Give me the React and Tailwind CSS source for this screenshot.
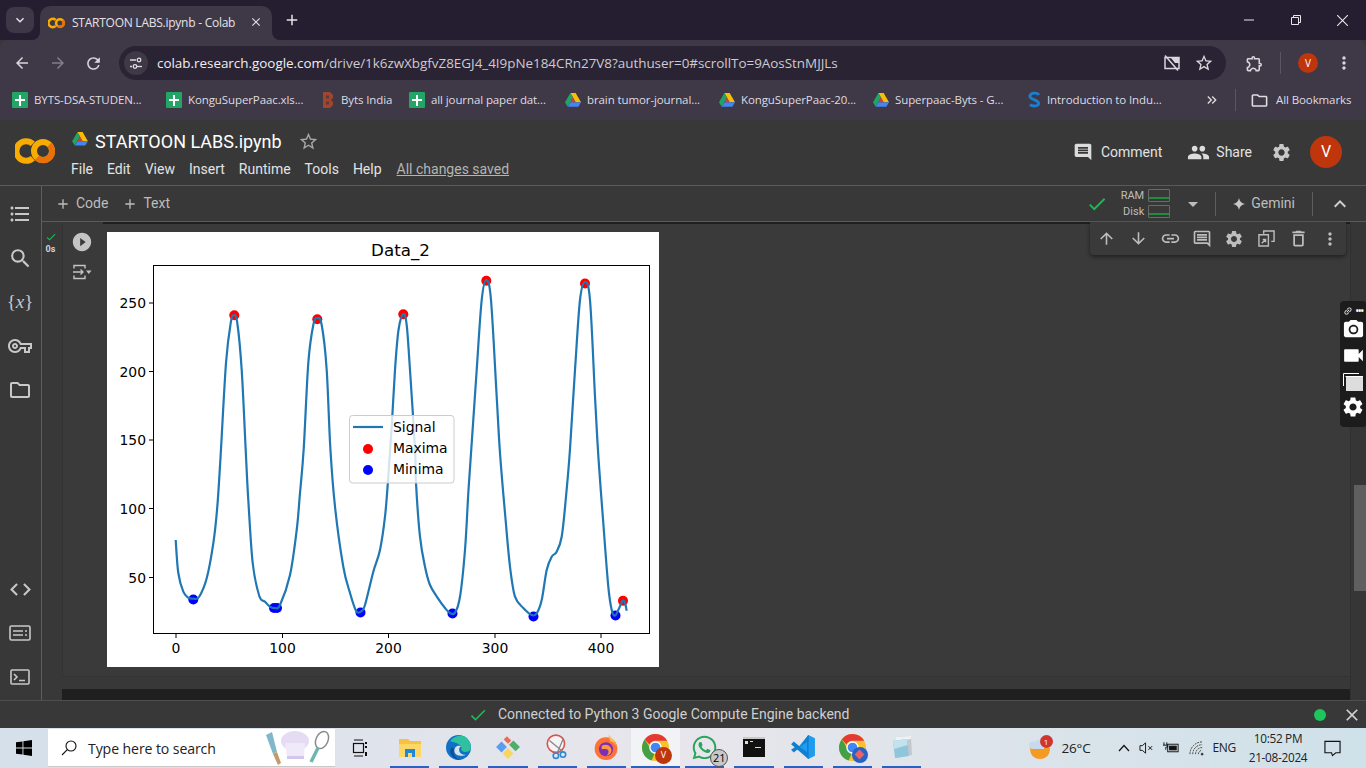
import {
  MdAdd, MdArrowBack, MdArrowDownward, MdArrowDropDown, MdArrowForward, MdArrowUpward, MdCheck, MdClose,
  MdCode, MdComment, MdExpandMore, MdFormatListBulleted, MdKeyboardArrowUp,
  MdKeyboardDoubleArrowRight, MdLink, MdMoreVert, MdOutlineComment, MdOutlineDelete, MdOutlineExtension,
  MdOutlineFolder, MdOutlineVpnKey, MdPeople, MdPhotoCamera, MdPlayCircleFilled, MdRefresh, MdSearch,
  MdSettings, MdStarBorder, MdVideocam,
} from 'react-icons/md';
import { FaWhatsapp } from 'react-icons/fa';

const signal = [
  [175.7, 540], [178.3, 573], [183.3, 591.7], [188.3, 597.7], [193.3, 598.7], [199, 597], [206.7, 578.3], [213.3, 543.3],
  [217.3, 506.7], [221, 449], [226, 363], [230.7, 323], [234, 315], [237.3, 323], [241.7, 370], [245.7, 450],
  [248.3, 500], [252.7, 563], [259.3, 596], [265, 601.7], [270, 606.7], [275, 608], [280, 605], [290, 575],
  [296.7, 530], [300, 493], [303.7, 449], [308.3, 363], [313.3, 325], [317.3, 318], [321.7, 325], [326.7, 370],
  [330.4, 449], [335, 506.7], [343.3, 566.7], [350, 593], [356, 610.7], [360.7, 611.7], [365, 605], [373.3, 571.7],
  [380, 550], [385, 516.7], [388.3, 476.7], [391.7, 426.7], [395, 370], [398.5, 330], [403.3, 314], [406.7, 325],
  [410, 370], [415, 449], [416, 483], [420, 536.7], [425, 566.7], [430, 585], [437.3, 597.3], [445, 608],
  [450, 613], [455, 612.7], [460, 596.7], [465, 550], [468.3, 493], [471.3, 449], [476.7, 370], [481.7, 300],
  [486.3, 280], [491, 300], [496.7, 396.7], [500, 453], [505, 513], [510, 566.7], [515, 596.7], [523.3, 608],
  [531.7, 615], [536.7, 613.3], [541.7, 600], [546.7, 570], [551.7, 556.7], [556.7, 551.7], [561.7, 536.7], [565.7, 500],
  [570, 449], [575, 370], [580, 300], [585, 282], [590, 300], [595, 396.7], [598.6, 460], [603.3, 523],
  [608.3, 586.7], [611.7, 610], [615, 615.7], [618.3, 610], [622.7, 600.7], [625, 603], [626.7, 610.7],
];

const maxima = [[234.3, 315.3], [317.3, 319.3], [403.3, 314.3], [486.3, 280.7], [585, 283.5], [623, 600.7]];
const minima = [[193.3, 599.5], [274, 608], [277, 608], [360.5, 612.5], [452.5, 613.5], [533.5, 616.5], [615.5, 615.5]];

// catmull-rom through the traced points
function smoothPath(pts) {
  let d = `M${pts[0][0]} ${pts[0][1]}`;
  for (let i = 0; i < pts.length - 1; i++) {
    const p0 = pts[i - 1] || pts[i];
    const p1 = pts[i];
    const p2 = pts[i + 1];
    const p3 = pts[i + 2] || p2;
    const c1x = p1[0] + (p2[0] - p0[0]) / 6;
    const c1y = p1[1] + (p2[1] - p0[1]) / 6;
    const c2x = p2[0] - (p3[0] - p1[0]) / 6;
    const c2y = p2[1] - (p3[1] - p1[1]) / 6;
    d += ` C${c1x.toFixed(1)} ${c1y.toFixed(1)} ${c2x.toFixed(1)} ${c2y.toFixed(1)} ${p2[0]} ${p2[1]}`;
  }
  return d;
}

function ColabLogo({ className }) {
  return (
    <svg viewBox="0 0 40 28" className={className}>
      <path d="M17.800 6.800A9.800 9.800 0 1 0 17.800 21.200" fill="none" stroke="#f9ab00" strokeWidth="6" />
      <circle cx="28" cy="14" r="9" fill="none" stroke="#f9ab00" strokeWidth="6" />
      <path d="M34.400 7.600A9 9 0 0 1 22 20.700" fill="none" stroke="#e8710a" strokeWidth="6" />
    </svg>
  );
}

function Sheets() {
  return (
    <svg viewBox="0 0 16 16" className="w-4 h-4 shrink-0">
      <rect width="16" height="16" rx="1" fill="#23a566" />
      <path d="M7 3h2v4h4v2H9v5H7V9H3V7h4z" fill="#fff" />
    </svg>
  );
}

function Drive({ className = 'w-4 h-4 shrink-0' }) {
  return (
    <svg viewBox="0 0 18 16" className={className}>
      <path d="M6 0h6l6 10.500h-6z" fill="#fbbc04" />
      <path d="M6 0l3 5.200-6 10.300-3-5z" fill="#1fa463" />
      <path d="M3 15.500l3-5h12l-3 5z" fill="#4285f4" />
      <path d="M6 10.500h6L9 5.200z" fill="#ea4335" opacity="0.85" />
    </svg>
  );
}

function BytsIcon() {
  return (
    <svg viewBox="0 0 14 18" className="w-[14px] h-[18px] shrink-0">
      <path d="M2 1h7l3 3v3l-2 2 2 2v3l-3 3H2z" fill="#a2452f" />
      <path d="M5 4.500h3v3H5zM5 10.500h3v3H5z" fill="#5e3a34" />
    </svg>
  );
}

function StudyIcon() {
  return (
    <svg viewBox="0 0 14 18" className="w-[13px] h-[18px] shrink-0">
      <path d="M12 3.500C10 1 3 .5 2 4.500c-1 4 9 4 9.500 8 .3 3-6 4-9.500 1.500" fill="none" stroke="#1a7fd0" strokeWidth="3" />
    </svg>
  );
}

const bookmarks = [
  { icon: <Sheets />, label: 'BYTS-DSA-STUDEN...', box: 'w-[154px]' },
  { icon: <Sheets />, label: 'KonguSuperPaac.xls...', box: 'w-[155px]' },
  { icon: <BytsIcon />, label: 'Byts India', box: 'w-[88px]' },
  { icon: <Sheets />, label: 'all journal paper dat...', box: 'w-[156px]' },
  { icon: <Drive />, label: 'brain tumor-journal...', box: 'w-[154px]' },
  { icon: <Drive />, label: 'KonguSuperPaac-20...', box: 'w-[154px]' },
  { icon: <Drive />, label: 'Superpaac-Byts - G...', box: 'w-[155px]' },
  { icon: <StudyIcon />, label: 'Introduction to Indu...', box: 'w-[150px]' },
];

function TabStrip() {
  return (
    <div className="h-10 shrink-0 bg-[#251d30] flex items-end relative">
      <div className="absolute left-[6px] top-[7px] w-[28px] h-[26px] rounded-lg bg-[#3e3747] flex items-center justify-center text-[#e8e6ea]">
        <MdExpandMore size={16} />
      </div>
      <div className="ml-10 w-[232px] h-[34px] rounded-t-[10px] bg-[#3f3847] flex items-center pl-2 relative">
        <svg viewBox="0 0 8 8" className="absolute -left-[8px] bottom-0 w-2 h-2"><path d="M8 0v8H0a8 8 0 0 0 8-8z" fill="#3f3847" /></svg>
        <ColabLogo className="w-[17px] h-[12px] shrink-0" />
        <span className="ml-[7px] text-[12px] text-[#e4e2e7] whitespace-nowrap tracking-[-0.25px]">STARTOON LABS.ipynb - Colab</span>
        <MdClose size={14} className="absolute left-[209px] top-[9px] text-[#dedce1]" />
        <svg viewBox="0 0 8 8" className="absolute -right-[8px] bottom-0 w-2 h-2"><path d="M0 0v8h8a8 8 0 0 1-8-8z" fill="#3f3847" /></svg>
      </div>
      <MdAdd size={18} className="ml-[11px] mb-[11px] text-[#e4e2e7]" />
      <div className="ml-auto flex items-center h-full text-[#e8e6ea]">
        <svg viewBox="0 0 10 10" className="w-[10px] h-[10px] mr-[37px]"><path d="M0 5h10" stroke="currentColor" /></svg>
        <svg viewBox="0 0 10 10" className="w-[10px] h-[10px] mr-[36px]"><path d="M.5 2.500h7v7h-7zM2.500 2.500V.5h7v7h-2" fill="none" stroke="currentColor" /></svg>
        <svg viewBox="0 0 10 10" className="w-[11px] h-[11px] mr-[18px]"><path d="M0 0l10 10M10 0L0 10" stroke="currentColor" /></svg>
      </div>
    </div>
  );
}

function AddressRow() {
  return (
    <div className="h-10 shrink-0 bg-[#3f3847] rounded-tl-lg rounded-tr-lg flex items-center pt-[6px] text-[#d9d6dd]">
      <MdArrowBack size={18} className="ml-[13px]" />
      <MdArrowForward size={18} className="ml-[18px] text-[#837d8a]" />
      <MdRefresh size={19} className="ml-[17px]" />
      <div className="ml-4 w-[1107px] h-[34px] rounded-full bg-[#2a2333] flex items-center">
        <div className="ml-[5px] w-6 h-6 rounded-full bg-[#3f3847] flex items-center justify-center">
          <svg viewBox="0 0 14 14" className="w-[14px] h-[14px]" fill="none" stroke="#dedce1" strokeWidth="1.300">
            <path d="M1 4h6M1 10.500h2" />
            <circle cx="10" cy="4" r="1.800" />
            <circle cx="6" cy="10.500" r="1.800" />
            <path d="M8 10.500h5" />
          </svg>
        </div>
        <span className="ml-[8px] pl-px text-[13.45px] whitespace-nowrap text-[#cdcad2] tracking-[-0.02px]">
          <span className="text-[#f0eef1]">colab.research.google.com</span>/drive/1k6zwXbgfvZ8EGJ4_4I9pNe184CRn27V8?authuser=0#scrollTo=9AosStnMJJLs
        </span>
        <svg viewBox="0 0 18 18" className="w-[18px] h-[18px] ml-auto text-[#d9d6dd]" fill="none" stroke="currentColor" strokeWidth="1.500">
          <path d="M2 3.500h14v11H2z" />
          <path d="M8 4h8v5H12z" fill="currentColor" stroke="none" />
          <path d="M2 1.500l13 15" />
        </svg>
        <MdStarBorder size={20} className="ml-[13px] mr-[12px]" />
      </div>
      <MdOutlineExtension size={19} className="ml-[19px]" />
      <div className="ml-[16px] h-[22px] w-px bg-[#5b5463]" />
      <div className="ml-[17px] w-5 h-5 rounded-full bg-[#bf360c] flex items-center justify-center text-[10px] text-white">V</div>
      <MdMoreVert size={20} className="ml-[16px]" />
    </div>
  );
}

function BookmarkRow() {
  return (
    <div className="h-10 shrink-0 bg-[#3f3847] flex items-center pl-[12px] text-[11.5px] text-[#dedce1] tracking-[-0.1px]">
      {bookmarks.map((b, i) => (
        <div key={i} className={`${b.box} flex items-center gap-[6px] whitespace-nowrap`}>
          {b.icon}
          <span>{b.label}</span>
        </div>
      ))}
      <MdKeyboardDoubleArrowRight size={16} className="ml-[26px]" />
      <div className="ml-[15px] h-[22px] w-px bg-[#5b5463]" />
      <MdOutlineFolder size={19} className="ml-[14px]" />
      <span className="ml-[7px] whitespace-nowrap">All Bookmarks</span>
    </div>
  );
}

function ColabHeader() {
  const menus = ['File', 'Edit', 'View', 'Insert', 'Runtime', 'Tools', 'Help'];
  return (
    <div className="h-[65px] shrink-0 bg-[#383838] flex font-['Roboto',sans-serif]">
      <div className="w-[72px] shrink-0 pl-[15px] pt-[17px]">
        <ColabLogo className="w-[40px] h-[28px]" />
      </div>
      <div className="pt-[9px]">
        <div className="flex items-center h-[24px]">
          <Drive className="w-[16px] h-[14px] mb-[5px] shrink-0" />
          <span className="ml-[7px] text-[18px] text-white whitespace-nowrap">STARTOON LABS.ipynb</span>
          <MdStarBorder size={21} className="ml-[16px] text-[#a8a8a8]" />
        </div>
        <div className="flex items-center mt-[6px] -ml-px text-[14px] text-[#e3e3e3] gap-[14px] whitespace-nowrap">
          {menus.map((m) => <span key={m}>{m}</span>)}
          <span className="underline text-[#b4b4b4] ml-px">All changes saved</span>
        </div>
      </div>
      <div className="ml-auto flex items-center h-[56px] mt-[4px] text-[14px] text-[#e3e3e3]">
        <MdComment size={20} className="text-[#dcdcdc]" />
        <span className="ml-[8px]">Comment</span>
        <MdPeople size={23} className="ml-[25px] text-[#dcdcdc]" />
        <span className="ml-[6px]">Share</span>
        <MdSettings size={21} className="ml-[19px] text-[#c8c8c8]" />
        <div className="ml-[18px] mr-[24px] w-8 h-8 rounded-full bg-[#bf360c] flex items-center justify-center text-white text-[16px]">V</div>
      </div>
    </div>
  );
}

function Sidebar() {
  return (
    <div className="w-[42px] shrink-0 border-r border-[#5e5e5e] bg-[#383838] flex flex-col items-center text-[#c8c8c8] pb-[1px] pr-[1px]">
      <div className="h-[6px]" />
      <div className="h-[44px] flex items-center justify-center"><MdFormatListBulleted size={24} /></div>
      <div className="h-[44px] flex items-center justify-center"><MdSearch size={25} /></div>
      <div className="h-[44px] flex items-center justify-center font-['Liberation_Serif',serif] text-[19px]">{'{'}<span className="italic">x</span>{'}'}</div>
      <div className="h-[44px] flex items-center justify-center"><MdOutlineVpnKey size={24} /></div>
      <div className="h-[44px] flex items-center justify-center"><MdOutlineFolder size={24} /></div>
      <div className="mt-auto h-[44px] flex items-center justify-center"><MdCode size={25} /></div>
      <div className="h-[44px] flex items-center justify-center">
        <svg viewBox="0 0 22 16" className="w-[22px] h-4" fill="none" stroke="currentColor" strokeWidth="1.600">
          <rect x="1" y="1" width="20" height="14" rx="1.500" />
          <path d="M4 6h10M4 10h10M16 6h2M16 10h2" />
        </svg>
      </div>
      <div className="h-[44px] flex items-center justify-center">
        <svg viewBox="0 0 20 16" className="w-5 h-4" fill="none" stroke="currentColor" strokeWidth="1.600">
          <rect x="1" y="1" width="18" height="14" rx="1" />
          <path d="M4 5l3 3-3 3M9 11.500h6" />
        </svg>
      </div>
    </div>
  );
}

function RamBar({ label }) {
  return (
    <div className="flex items-center gap-[4px]">
      <span>{label}</span>
      <div className="w-[22px] h-[13px] border border-[#6a6a6a] rounded-[1px] flex items-end">
        <div className="w-full h-[2px] mb-[2px] bg-[#1e8e3e]" />
      </div>
    </div>
  );
}

function NotebookToolbar() {
  return (
    <div className="h-[36px] shrink-0 border-b border-[#5a5a5a] bg-[#383838] flex items-center text-[14px] text-[#bdbdbd] font-['Roboto',sans-serif]">
      <MdAdd size={16} className="ml-[13px]" />
      <span className="ml-[5px]">Code</span>
      <MdAdd size={16} className="ml-[14px]" />
      <span className="ml-[5px]">Text</span>
      <MdCheck size={22} className="ml-auto text-[#1db954]" />
      <div className="ml-[13px] flex flex-col items-end gap-[3px] text-[11px] leading-[13px] text-[#bdbdbd]">
        <RamBar label="RAM" />
        <RamBar label="Disk" />
      </div>
      <MdArrowDropDown size={24} className="ml-[11px]" />
      <div className="ml-[10px] h-6 w-px bg-[#5e5e5e]" />
      <svg viewBox="0 0 12 12" className="w-3 h-3 ml-[17px]"><path d="M6 0c.6 3.500 2.500 5.400 6 6-3.500.6-5.400 2.500-6 6-.6-3.500-2.500-5.400-6-6 3.500-.6 5.400-2.500 6-6z" fill="#c8c8c8" /></svg>
      <span className="ml-[6px]">Gemini</span>
      <div className="ml-[17px] h-6 w-px bg-[#5e5e5e]" />
      <MdKeyboardArrowUp size={24} className="ml-[15px] mr-[14px] text-[#d0d0d0]" />
    </div>
  );
}

function Chart() {
  const yTicks = [[303, '250'], [371.500, '200'], [440, '150'], [508.500, '100'], [577.500, '50']];
  const xTicks = [[176, '0'], [282.500, '100'], [388.500, '200'], [495, '300'], [601, '400']];
  return (
    <svg viewBox="107 232 552 435" className="w-[552px] h-[435px] shrink-0 bg-white" fontFamily="'DejaVu Sans', sans-serif" fill="#000">
      <text x="400.500" y="256" fontSize="16.700" textAnchor="middle">Data_2</text>
      {maxima.map(([x, y], i) => <circle key={i} cx={x} cy={y} r="5" fill="#ff0000" />)}
      {minima.map(([x, y], i) => <circle key={i} cx={x} cy={y} r="5" fill="#0000ff" />)}
      <path d={smoothPath(signal)} fill="none" stroke="#1f77b4" strokeWidth="2.200" strokeLinejoin="round" />
      <rect x="153.500" y="265.500" width="496" height="368" fill="none" stroke="#000" strokeWidth="1" />
      {yTicks.map(([y, t]) => (
        <g key={t}>
          <path d={`M149 ${y}H153`} stroke="#000" />
          <text x="146" y={y + 5} fontSize="13.900" textAnchor="end">{t}</text>
        </g>
      ))}
      {xTicks.map(([x, t]) => (
        <g key={t}>
          <path d={`M${x} 634V638`} stroke="#000" />
          <text x={x} y="653" fontSize="13.900" textAnchor="middle">{t}</text>
        </g>
      ))}
      <rect x="349.500" y="415.500" width="104.500" height="67.500" rx="3" fill="#fff" fillOpacity="0.8" stroke="#ccc" />
      <path d="M353 427H383" stroke="#1f77b4" strokeWidth="2.200" />
      <text x="393" y="432" fontSize="13.900">Signal</text>
      <circle cx="368" cy="449" r="5" fill="#ff0000" />
      <text x="393" y="453" fontSize="13.900">Maxima</text>
      <circle cx="368" cy="470" r="5" fill="#0000ff" />
      <text x="393" y="474" fontSize="13.900">Minima</text>
    </svg>
  );
}

function CellToolbar() {
  const cls = 'w-8 flex items-center justify-center';
  return (
    <div className="absolute right-[20px] top-0 w-[256px] h-[33px] bg-[#3a3a3a] rounded-b-[4px] shadow-[0_2px_4px_rgba(0,0,0,0.45)] flex items-center text-[#bdbdbd]">
      <div className={cls}><MdArrowUpward size={19} /></div>
      <div className={cls}><MdArrowDownward size={19} /></div>
      <div className={cls}><MdLink size={21} /></div>
      <div className={cls}><MdOutlineComment size={20} /></div>
      <div className={cls}><MdSettings size={20} /></div>
      <div className={cls}>
        <svg viewBox="0 0 18 18" className="w-[17px] h-[17px]" fill="none" stroke="currentColor" strokeWidth="1.500">
          <path d="M6 4V1h11v11h-3M1 5h10v12H1z" />
          <path d="M4 14l4-4M5 10h3v3" />
        </svg>
      </div>
      <div className={cls}><MdOutlineDelete size={21} /></div>
      <div className={cls}><MdMoreVert size={20} /></div>
    </div>
  );
}

function FloatingWidget() {
  return (
    <div className="absolute right-0 top-[79px] w-[26px] h-[126px] bg-[#1c1c1c] rounded-l-[4px] rounded-r-[3px] flex flex-col items-center text-white">
      <div className="h-[17px] flex items-center gap-[3px] text-[8px] leading-none pt-[2px]">
        <MdLink size={10} className="-rotate-45" />
        <span className="tracking-[-0.5px] font-bold">•••</span>
      </div>
      <MdPhotoCamera size={23} />
      <MdVideocam size={25} className="mt-[2px]" />
      <svg viewBox="0 0 20 18" className="w-5 h-[18px] mt-[5px]" fill="none">
        <path d="M.5 13V.5H16" stroke="#fff" />
        <path d="M3 4h17v14H3z" fill="#ddd" />
        <path d="M2.500 3.500H20" stroke="#fff" />
      </svg>
      <MdSettings size={24} className="mt-[4px]" />
    </div>
  );
}

function Notebook() {
  return (
    <div className="flex-1 min-w-0 flex flex-col">
      <NotebookToolbar />
      <div className="flex-1 min-h-0 flex relative bg-[#383838]">
        <div className="flex-1 min-w-0 flex flex-col">
          <div className="h-[2px] shrink-0 ml-[61px] bg-[#1f1f1f]" />
          <div className="flex flex-1 min-h-0">
            <div className="w-[20px] shrink-0 flex flex-col items-center pt-[7px] pr-[3px] font-['Roboto',sans-serif]">
              <MdCheck size={12} className="text-[#1db954]" />
              <span className="text-[9px] leading-[11px] font-bold text-[#d4d4d4] mt-[1px]">0s</span>
            </div>
            <div className="flex-1 min-w-0 flex flex-col">
              <div className="h-[453px] shrink-0 flex border-l border-b border-[#333333] bg-[#3a3a3a]">
                <div className="w-[44px] shrink-0 flex flex-col items-center text-[#c4c4c4] pt-[7px] pr-[7px]">
                  <MdPlayCircleFilled size={22} />
                  <svg viewBox="0 0 20 16" className="w-5 h-4 mt-[11px]" fill="none" stroke="currentColor" strokeWidth="1.400">
                    <path d="M2 4.500V1.500h11v3M2 11.500v3h11v-3M1 8h10M8.500 5.500L11 8l-2.500 2.500" />
                    <path d="M14 6.500h5.500l-2.750 3.500z" fill="currentColor" stroke="none" />
                  </svg>
                </div>
                <div className="pt-[8px]">
                  <Chart />
                </div>
              </div>
              <div className="h-[12px] shrink-0" />
              <div className="h-[11px] shrink-0 bg-[#1f1f1f]" />
            </div>
          </div>
        </div>
        <div className="w-4 shrink-0 bg-[#363636] border-l border-[#303030] pl-[3px] pt-[263px]">
          <div className="h-[106px] bg-[#5f5f5f]" />
        </div>
        <CellToolbar />
        <FloatingWidget />
      </div>
    </div>
  );
}

function StatusBar() {
  return (
    <div className="h-[28px] shrink-0 border-t border-[#4e4e4e] bg-[#383838] flex items-center text-[14px] text-[#cfcfcf] font-['Roboto',sans-serif]">
      <MdCheck size={20} className="ml-[468px] text-[#1db954]" />
      <span className="ml-[10px]">Connected to Python 3 Google Compute Engine backend</span>
      <div className="ml-auto w-3 h-3 rounded-full bg-[#1ec45c]" />
      <MdClose size={20} className="ml-[16px] mr-[4px] text-[#d0d0d0]" />
    </div>
  );
}

function Explorer() {
  return (
    <svg viewBox="0 0 24 24" className="w-6 h-6">
      <path d="M1 4h9l2 2h11v16H1z" fill="#f5c242" />
      <path d="M1 9h22v13H1z" fill="#fcd765" />
      <path d="M7 14h10v8h-3v-4h-4v4H7z" fill="#1f88d9" />
    </svg>
  );
}

function Edge() {
  return (
    <svg viewBox="0 0 24 24" className="w-[25px] h-[25px]">
      <circle cx="12" cy="12" r="12" fill="#1172c4" />
      <path d="M4 6C8 0 17-1 21 4c2 2.500 3 5 3 8 0 3-3 5-7 4-2-.5-3-2-2-4-1-3-6-5-11-6z" fill="#2fc0a0" />
      <path d="M5 12c-3 6 2 12 10 12-6-1-9-6-7-11z" fill="#0c4e99" />
      <path d="M8 15c0-4 4-6 7-4-2 0-3 2-2 5 .6 2 3 3 6 3-3 2-11 1-11-4z" fill="#d6e2ec" />
    </svg>
  );
}

function Diamonds() {
  return (
    <svg viewBox="0 0 24 24" className="w-[26px] h-[26px]">
      <path d="M1 12l5-5 5 5-5 5z" fill="#5b9bf0" />
      <path d="M8 5l3-3 4 4-3 3z" fill="#ea6a5a" />
      <path d="M13 10l4-4 6 6-4 4z" fill="#4caf6a" />
      <path d="M7 18l5-5 5 5-5 5z" fill="#f6d660" />
    </svg>
  );
}

function Snip() {
  return (
    <svg viewBox="0 0 24 24" className="w-[26px] h-[26px]" fill="none">
      <circle cx="11" cy="9" r="8" stroke="#d9534f" strokeWidth="1.500" fill="#f4f4f6" />
      <path d="M5 6l12 10M18 4L12 18" stroke="#888" strokeWidth="1.200" />
      <circle cx="17.500" cy="19" r="2.500" stroke="#2b8ad6" strokeWidth="1.500" />
      <circle cx="11" cy="20" r="2.500" stroke="#2b8ad6" strokeWidth="1.500" />
    </svg>
  );
}

function Firefox() {
  return (
    <svg viewBox="0 0 24 24" className="w-[26px] h-[26px]">
      <circle cx="12" cy="13.500" r="10.500" fill="#ff7139" />
      <path d="M14 1c3 2 7 6 8 11-1-3-4-5-6-5z" fill="#ffbd4f" />
      <circle cx="12" cy="14" r="6.500" fill="#7b2fb5" />
      <path d="M8 11c3-2 8-1 9 3 .5 3-2 6-5 6 2-1 3-3 2-5-1-1.500-4-1-6-1z" fill="#ff9640" />
    </svg>
  );
}

function Chrome({ badge }) {
  return (
    <div className="relative w-[27px] h-[27px]">
      <svg viewBox="0 0 24 24" className="w-[27px] h-[27px]">
        <circle cx="12" cy="12" r="12" fill="#fbc02d" />
        <path d="M12 0a12 12 0 0 1 10.400 6H12a6 6 0 0 0-5.400 3.300L2.500 4.700A12 12 0 0 1 12 0z" fill="#e53935" />
        <path d="M2.500 4.700L8 14a6 6 0 0 0 3 4l-2.500 5.500A12 12 0 0 1 2.500 4.700z" fill="#43a047" />
        <circle cx="12" cy="12" r="5.500" fill="#fff" />
        <circle cx="12" cy="12" r="4.300" fill="#4285f4" />
      </svg>
      {badge}
    </div>
  );
}

function Cmd() {
  return (
    <svg viewBox="0 0 24 24" className="w-[24px] h-[24px]">
      <rect x="1" y="2" width="22" height="20" fill="#111" />
      <rect x="1" y="2" width="22" height="2" fill="#c9c9c9" />
      <path d="M3 6h3v3H3zM8 6h3v1H8zM13 12h6v1h-6z" fill="#ddd" />
    </svg>
  );
}

function VsCode() {
  return (
    <svg viewBox="0 0 24 24" className="w-[26px] h-[26px]">
      <path d="M17 1l6 3v16l-6 3-10-10z" fill="#1f9cf0" />
      <path d="M17 1v22l-1-1V2z" fill="#0a6fb8" />
      <path d="M17 6.500L9 12l8 5.500v5.500L1 9.500 3.500 7l5.500 4.500L17 1z" fill="#0f7fd0" />
      <path d="M1 14.500L3.500 17l5-4-2.500-2z" fill="#0f7fd0" />
    </svg>
  );
}

function Notepad() {
  return (
    <svg viewBox="0 0 24 24" className="w-[24px] h-[26px]">
      <path d="M7 2l15-1 1 19-15 3z" fill="#c2c8cc" />
      <path d="M7 2l15-1v3L7 6z" fill="#eef2f4" />
      <path d="M4 6l14-2 2 17-14 2z" fill="#8fc6dc" />
      <path d="M4 6l14-2 .5 6L5 14z" fill="#c2e2ee" />
    </svg>
  );
}

const taskApps = [
  { el: <Explorer /> },
  { el: <Edge /> },
  { el: <Diamonds /> },
  { el: <Snip /> },
  { el: <Firefox /> },
  {
    el: (
      <Chrome
        badge={<div className="absolute -right-[3px] -bottom-[3px] w-[17px] h-[17px] rounded-full bg-[#bf360c] text-white text-[9px] flex items-center justify-center">V</div>}
      />
    ),
    active: true,
  },
  {
    el: (
      <div className="relative">
        <FaWhatsapp size={27} className="text-[#2aa65c]" />
        <div className="absolute -right-[10px] -bottom-[6px] w-[18px] h-[18px] rounded-full bg-[#c8c8c8] border border-[#555] text-[11px] leading-none text-black flex items-center justify-center">21</div>
      </div>
    ),
  },
  { el: <Cmd /> },
  { el: <VsCode /> },
  {
    el: (
      <Chrome
        badge={<div className="absolute -right-[2px] -bottom-[2px] w-[16px] h-[16px] rounded-full bg-[#2563c9] flex items-center justify-center"><div className="w-[7px] h-[7px] rotate-45 bg-[#f06060]" /></div>}
      />
    ),
  },
  { el: <Notepad /> },
];

function Taskbar() {
  return (
    <div className="h-10 shrink-0 bg-linear-to-r from-[#d5e0eb] via-[#e8e6ec] to-[#cfe1e9] flex font-['Open_Sans',sans-serif] text-black">
      <div className="w-[48px] shrink-0 flex items-center justify-center">
        <svg viewBox="0 0 16 16" className="w-4 h-4">
          <path d="M0 2.300L6.500 1.400V7.600H0zM7.400 1.300L16 0V7.600H7.400zM0 8.400H6.500V14.600L0 13.700zM7.400 8.400H16V16L7.400 14.700z" fill="#000" />
        </svg>
      </div>
      <div className="w-[287px] shrink-0 my-[1px] bg-white border-b border-[#c8c8c8] flex items-center relative">
        <svg viewBox="0 0 16 16" className="w-[16px] h-[16px] ml-[13px]" fill="none" stroke="#111" strokeWidth="1.100">
          <circle cx="10" cy="6" r="5" />
          <path d="M6.300 9.700L1 15" />
        </svg>
        <span className="ml-[11px] pt-[2px] text-[14.1px] tracking-[-0.1px] text-[#222]">Type here to search</span>
        <svg viewBox="0 0 66 38" className="w-[66px] h-[38px] ml-auto mr-[4px]">
          <path d="M1 6l6-3 5 20-4 2z" fill="#7fb8c8" />
          <path d="M8 25l4-2 4 11-3 2z" fill="#c59a6a" />
          <ellipse cx="30" cy="12" rx="14" ry="10" fill="#e5dcf4" />
          <path d="M20 14h20l-1 14H22z" fill="#efe9f9" />
          <path d="M22 27h17v3H22z" fill="#d2c6ea" />
          <ellipse cx="57" cy="11" rx="6" ry="9" transform="rotate(25 57 11)" fill="none" stroke="#8a8a8a" strokeWidth="1.500" />
          <path d="M53 19l-7 14" stroke="#6fb6ae" strokeWidth="3.500" />
        </svg>
      </div>
      <div className="w-[50px] shrink-0 flex items-center justify-center">
        <svg viewBox="0 0 16 18" className="w-4 h-[18px]" fill="none" stroke="#111" strokeWidth="1.200">
          <path d="M2 1h9M2 17h9" />
          <rect x="1.500" y="4.500" width="10" height="9" />
          <path d="M14 3v2M14 7v2M14 13v4" strokeWidth="2" />
        </svg>
      </div>
      <div className="flex shrink-0">
        {taskApps.map((a, i) => (
          <div key={i} className={`w-[49.2px] h-10 flex flex-col ${a.active ? 'bg-[#f1f3f7]' : ''}`}>
            <div className="flex-1 flex items-center justify-center">{a.el}</div>
            <div className={`h-[2px] ${a.active ? '' : 'mx-[5px]'} bg-[#2563c9]`} />
          </div>
        ))}
      </div>
      <div className="ml-auto flex items-center text-[#222]">
        <div className="relative w-6 h-6 mr-[11px]">
          <svg viewBox="0 0 24 24" className="w-6 h-6">
            <path d="M3 12h20c0 7-4 11-10 11S3 19 3 12z" fill="#f59a23" />
            <path d="M2 9a4 4 0 0 1 6-3 5 5 0 0 1 9 2v5H6c-3 0-4-2-4-4z" fill="#c6d9ee" />
          </svg>
          <div className="absolute -right-[2px] -top-[1px] w-[13px] h-[13px] rounded-full bg-[#d1342f] text-white text-[8px] flex items-center justify-center">1</div>
        </div>
        <span className="text-[13.5px] tracking-[-0.2px]">26°C</span>
        <svg viewBox="0 0 12 8" className="w-[12px] h-[8px] ml-[28px]" fill="none" stroke="#111" strokeWidth="1.200"><path d="M1 7l5-5.500L11 7" /></svg>
        <svg viewBox="0 0 16 14" className="w-[15px] h-[14px] ml-[9px]" fill="none" stroke="#111" strokeWidth="1">
          <path d="M1 4.500h2.500L7 1.500v11L3.500 9.500H1zM10 5l4 4M14 5l-4 4" />
        </svg>
        <svg viewBox="0 0 18 14" className="w-[17px] h-[14px] ml-[9px]" fill="none" stroke="#111" strokeWidth="1">
          <rect x="5" y="3" width="11" height="8" />
          <rect x="7" y="5" width="7" height="4" fill="#111" />
          <path d="M1 1v3M4 1v3M0 4h5v2H3v3" />
        </svg>
        <svg viewBox="0 0 16 16" className="w-[15px] h-[15px] ml-[9px]" fill="none" stroke="#333" strokeWidth="1">
          <path d="M1 14A13 13 0 0 1 14 1M4 14A10 10 0 0 1 14 4M7 14a7 7 0 0 1 7-7M10 14a4 4 0 0 1 4-4" strokeDasharray="2 1" />
          <circle cx="14" cy="14" r="1" fill="#333" />
        </svg>
        <span className="ml-[8px] text-[12px] tracking-[-0.3px]">ENG</span>
        <div className="ml-[16px] w-[52px] flex flex-col items-center text-[11.8px] leading-[19px] tracking-[-0.3px] whitespace-nowrap">
          <span>10:52 PM</span>
          <span>21-08-2024</span>
        </div>
        <svg viewBox="0 0 18 18" className="w-[17px] h-[17px] ml-[20px] mr-[25px]" fill="none" stroke="#111" strokeWidth="1.200">
          <path d="M1 1.500h16v12h-4.500L9 16.500l-1-3H1z" />
        </svg>
      </div>
    </div>
  );
}

export default function App() {
  return (
    <div className="w-[1366px] h-screen overflow-hidden flex flex-col font-['Open_Sans',sans-serif] bg-[#383838]">
      <TabStrip />
      <AddressRow />
      <BookmarkRow />
      <ColabHeader />
      <div className="flex-1 min-h-0 flex border-t border-[#5a5a5a]">
        <Sidebar />
        <Notebook />
      </div>
      <StatusBar />
      <Taskbar />
    </div>
  );
}
